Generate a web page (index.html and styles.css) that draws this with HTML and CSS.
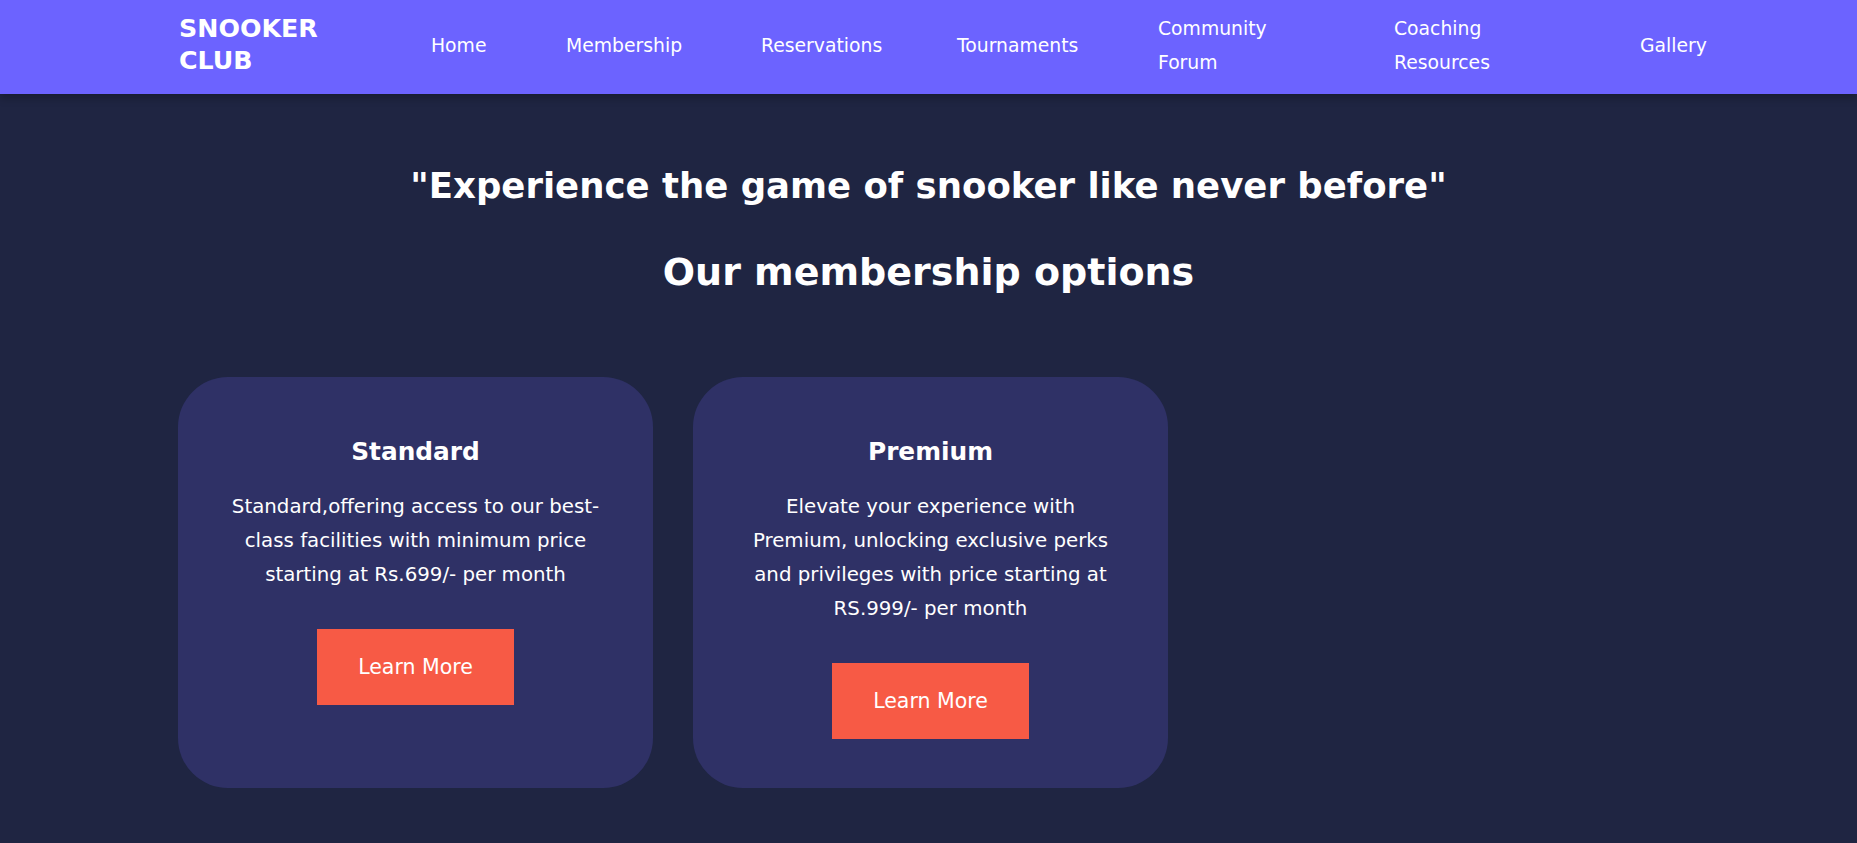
FILE: index.html
```html
<!DOCTYPE html>
<html lang="en">
<head>
<meta charset="utf-8">
<title>Snooker Club</title>
<link rel="stylesheet" href="styles.css">
</head>
<body>
<header class="site-header">
  <div class="header-inner">
    <div class="logo">SNOOKER CLUB</div>
    <ul class="nav-list">
      <li><a href="#">Home</a></li>
      <li><a href="#">Membership</a></li>
      <li><a href="#">Reservations</a></li>
      <li><a href="#">Tournaments</a></li>
      <li><a href="#">Community Forum</a></li>
      <li><a href="#">Coaching Resources</a></li>
      <li><a href="#">Gallery</a></li>
    </ul>
  </div>
</header>
<main class="content">
  <h1 class="tagline">"Experience the game of snooker like never before"</h1>
  <h2 class="section-title">Our membership options</h2>
  <div class="cards">
    <div class="card">
      <h3 class="card-title">Standard</h3>
      <p class="card-text">Standard,offering access to our best-class facilities with minimum price starting at Rs.699/- per month</p>
      <a class="btn" href="#">Learn More</a>
    </div>
    <div class="card">
      <h3 class="card-title">Premium</h3>
      <p class="card-text">Elevate your experience with Premium, unlocking exclusive perks and privileges with price starting at RS.999/- per month</p>
      <a class="btn" href="#">Learn More</a>
    </div>
  </div>
</main>
</body>
</html>
```

FILE: styles.css
```css
* { box-sizing: border-box; }

body {
  margin: 0;
  background: #1f2542;
  color: #ffffff;
  font-family: "DejaVu Sans", Verdana, sans-serif;
}

.site-header {
  height: 94px;
  background: #6c63ff;
  box-shadow: 0 4px 8px rgba(0, 0, 0, 0.25);
  position: relative;
}

.header-inner {
  height: 100%;
  display: flex;
  align-items: center;
  padding-left: 179px;
  padding-bottom: 4px;
}

.logo {
  width: 145px;
  margin-right: 107px;
  font-size: 25.3px;
  font-weight: 700;
  line-height: 32px;
}

.nav-list {
  list-style: none;
  margin: 0;
  padding: 2px 0 0;
  display: grid;
  grid-template-columns: 56px 116px 117px 122px 157px 167px auto;
  column-gap: 79px;
  align-items: center;
}

.nav-list a {
  color: #ffffff;
  text-decoration: none;
  font-size: 18.8px;
  line-height: 34px;
}

.content {
  padding-top: 69px;
}

.tagline {
  margin: 0;
  text-align: center;
  font-size: 35.5px;
  line-height: 46px;
  font-weight: 700;
}

.section-title {
  margin: 40px 0 0;
  text-align: center;
  font-size: 38px;
  line-height: 46px;
  font-weight: 700;
}

.cards {
  display: flex;
  gap: 40px;
  padding-left: 178px;
  margin-top: 82px;
}

.card {
  width: 475px;
  background: #2f3166;
  border-radius: 50px;
  padding: 60px 46px 49px;
  text-align: center;
  display: flex;
  flex-direction: column;
  align-items: center;
}

.card-title {
  margin: 0;
  font-size: 24.8px;
  line-height: 30px;
  font-weight: 700;
}

.card-text {
  margin: 23px 0 0;
  font-size: 19.8px;
  line-height: 34px;
}

.btn {
  margin-top: 37px;
  display: inline-block;
  background: #f75a45;
  color: #ffffff;
  text-decoration: none;
  font-size: 20.5px;
  line-height: 24px;
  padding: 26px 41px;
}
```
